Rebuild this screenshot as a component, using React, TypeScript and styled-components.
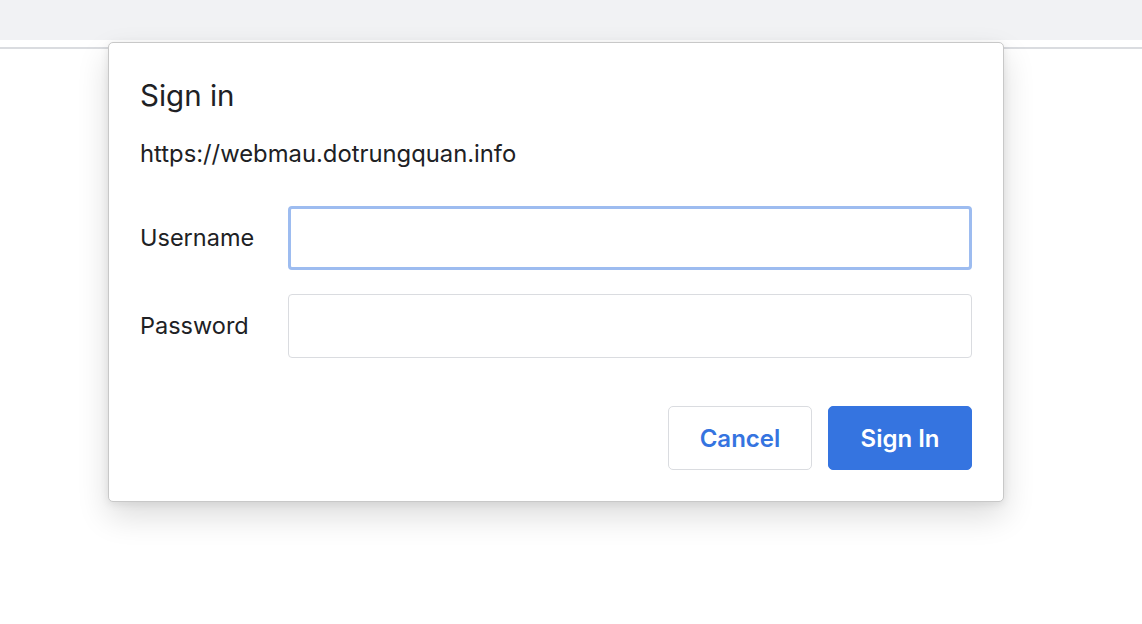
import styled, { createGlobalStyle } from "styled-components";

const GlobalStyle = createGlobalStyle`
  html, body {
    margin: 0;
    padding: 0;
    background: #ffffff;
    font-family: Inter, "Noto Sans", sans-serif;
    color: #202124;
  }
`;

const Page = styled.div`
  position: relative;
  width: 1142px;
  height: 624px;
  overflow: hidden;
  background: #ffffff;
`;

const TopBar = styled.div`
  height: 40px;
  background: #f1f2f4;
`;

const Divider = styled.div`
  margin-top: 7px;
  height: 2px;
  background: #dadce0;
`;

const Dialog = styled.div`
  position: absolute;
  left: 108px;
  top: 42px;
  width: 896px;
  height: 460px;
  box-sizing: border-box;
  padding: 34px 31px 0 31px;
  background: #ffffff;
  border: 1px solid #c8c8c8;
  border-radius: 5px;
  box-shadow: 0 14px 32px rgba(0, 0, 0, 0.14), 0 2px 8px rgba(0, 0, 0, 0.08);
`;

const Title = styled.h1`
  margin: 0;
  font-size: 29.5px;
  line-height: 36px;
  font-weight: 400;
`;

const Origin = styled.div`
  margin-top: 27px;
  font-size: 23.8px;
  line-height: 28px;
`;

const Form = styled.form`
  margin-top: 38px;
  display: flex;
  flex-direction: column;
  gap: 24px;
`;

const Row = styled.div`
  display: flex;
  align-items: center;
`;

const Label = styled.label`
  width: 148px;
  font-size: 23.5px;
  line-height: 28px;
`;

const Input = styled.input<{ $focused?: boolean }>`
  flex: 1;
  height: 64px;
  box-sizing: border-box;
  padding: 0 14px;
  font-family: inherit;
  font-size: 22px;
  outline: none;
  background: #ffffff;
  border-radius: 4px;
  border: ${(p) => (p.$focused ? "3px solid #9dbcf0" : "1px solid #dadce0")};
`;

const Actions = styled.div`
  margin-top: 48px;
  display: flex;
  justify-content: flex-end;
  gap: 16px;
`;

const Button = styled.button<{ $primary?: boolean }>`
  width: 144px;
  height: 64px;
  border-radius: 5px;
  font-family: inherit;
  font-size: 24px;
  font-weight: 600;
  cursor: pointer;
  color: ${(p) => (p.$primary ? "#ffffff" : "#3574e0")};
  background: ${(p) => (p.$primary ? "#3574e0" : "#ffffff")};
  border: ${(p) => (p.$primary ? "1px solid #3574e0" : "1px solid #dadce0")};
`;

export default function App() {
  return (
    <Page>
      <GlobalStyle />
      <TopBar />
      <Divider />
      <Dialog>
        <Title>Sign in</Title>
        <Origin>https://webmau.dotrungquan.info</Origin>
        <Form>
          <Row>
            <Label htmlFor="username">Username</Label>
            <Input id="username" type="text" $focused />
          </Row>
          <Row>
            <Label htmlFor="password">Password</Label>
            <Input id="password" type="password" />
          </Row>
        </Form>
        <Actions>
          <Button type="button">Cancel</Button>
          <Button type="button" $primary>
            Sign In
          </Button>
        </Actions>
      </Dialog>
    </Page>
  );
}
